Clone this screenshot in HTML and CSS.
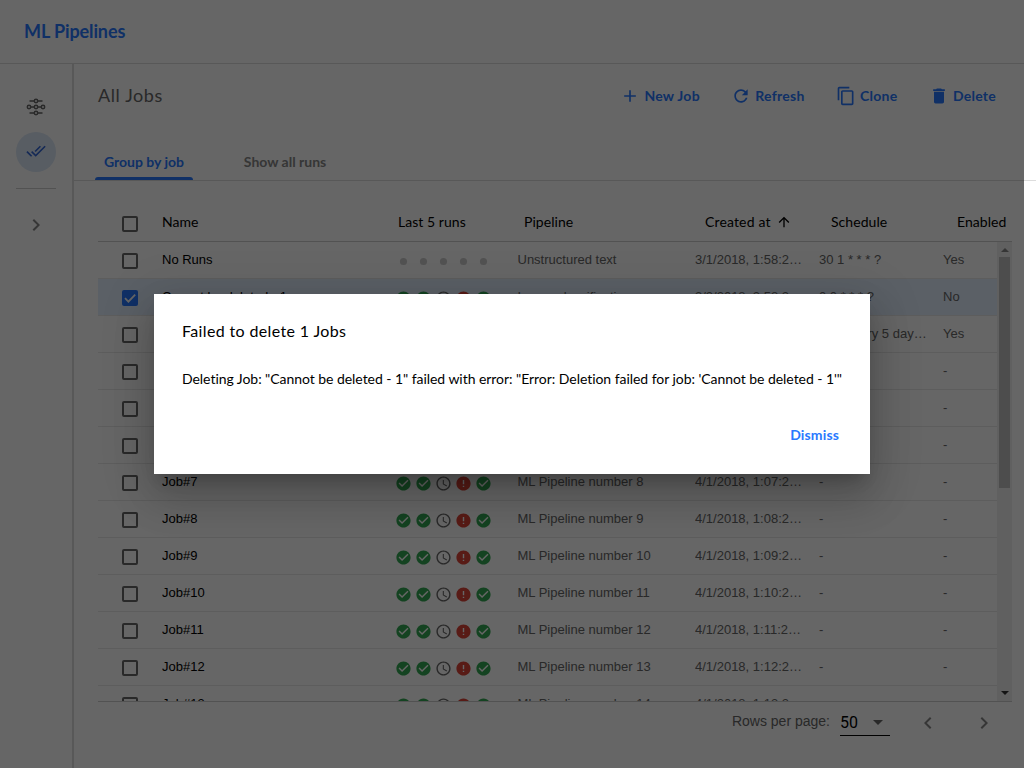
FILE: index.html
```html
<!DOCTYPE html>
<html lang="en">
<head>
<meta charset="utf-8">
<title>ML Pipelines</title>
<link rel="stylesheet" href="styles.css">
</head>
<body>
<svg class="sprite" aria-hidden="true">
  <symbol id="box" viewBox="0 0 16 16"><rect x="1" y="1" width="14" height="14" rx="1" fill="none" stroke="currentColor" stroke-width="2"/></symbol>
  <symbol id="box-checked" viewBox="0 0 16 16"><rect width="16" height="16" rx="2" fill="currentColor"/><path d="M3 8.2 6.4 11.6 13.2 4.6" fill="none" stroke="#fff" stroke-width="1.8"/></symbol>
  <symbol id="ok" viewBox="0 0 24 24"><path fill="currentColor" d="M12 2C6.48 2 2 6.48 2 12s4.48 10 10 10 10-4.480 10-10S17.520 2 12 2zm-2 15l-5-5 1.410-1.410L10 14.170l7.590-7.590L19 8l-9 9z"/></symbol>
  <symbol id="clock" viewBox="0 0 24 24"><path fill="currentColor" d="M11.990 2C6.470 2 2 6.480 2 12s4.470 10 9.990 10C17.520 22 22 17.520 22 12S17.520 2 11.990 2zM12 20c-4.420 0-8-3.580-8-8s3.580-8 8-8 8 3.580 8 8-3.580 8-8 8zM12.500 7H11v6l5.250 3.150.750-1.230-4.500-2.670z"/></symbol>
  <symbol id="error" viewBox="0 0 24 24"><path fill="currentColor" d="M12 2C6.480 2 2 6.480 2 12s4.480 10 10 10 10-4.480 10-10S17.520 2 12 2zm1 15h-2v-2h2v2zm0-4h-2V7h2v6z"/></symbol>
  <symbol id="dot" viewBox="0 0 24 24"><circle cx="12" cy="12" r="5" fill="currentColor"/></symbol>
</svg>

<div class="app">
  <header class="topbar">ML Pipelines</header>
  <div class="body">
    <nav class="sidenav">
      <span class="nav-item">
        <svg width="20" height="20" viewBox="0 0 20 20" fill="none" stroke="currentColor" stroke-width="1.500"><path d="M3.500 4H8M12 4h4.500M4.800 10h3.400M11.800 10h3.400M3.500 16H8M12 16h4.500"/><circle cx="10" cy="4" r="1.700"/><circle cx="3" cy="10" r="1.700"/><circle cx="10" cy="10" r="1.700"/><circle cx="17" cy="10" r="1.700"/><circle cx="10" cy="16" r="1.700"/></svg>
      </span>
      <span class="nav-item active">
        <svg width="20" height="20" viewBox="0 0 24 24"><path fill="currentColor" d="M18 7l-1.410-1.410-6.340 6.340 1.410 1.410L18 7zm4.240-1.410L11.660 16.170 7.480 12l-1.410 1.410L11.660 19l12-12-1.420-1.410zM.410 13.410L6 19l1.410-1.410L1.830 12 .410 13.410z"/></svg>
      </span>
      <span class="nav-rule"></span>
      <span class="nav-expand">
        <svg width="24" height="24" viewBox="0 0 24 24"><path fill="currentColor" d="M10 6L8.590 7.410 13.170 12l-4.580 4.590L10 18l6-6z"/></svg>
      </span>
    </nav>

    <main class="content">
      <div class="toolbar">
        <h1 class="title">All Jobs</h1>
        <div class="actions">
          <button class="action"><svg width="20" height="20" viewBox="0 0 24 24"><path fill="currentColor" d="M19 13h-6v6h-2v-6H5v-2h6V5h2v6h6v2z"/></svg><span>New Job</span></button>
          <button class="action"><svg width="20" height="20" viewBox="0 0 24 24"><path fill="currentColor" d="M17.650 6.350C16.200 4.900 14.210 4 12 4c-4.420 0-7.990 3.580-7.990 8s3.570 8 7.990 8c3.730 0 6.840-2.550 7.730-6h-2.080c-.820 2.330-3.040 4-5.650 4-3.310 0-6-2.690-6-6s2.690-6 6-6c1.660 0 3.140.690 4.220 1.780L13 11h7V4l-2.350 2.350z"/></svg><span>Refresh</span></button>
          <button class="action"><svg width="20" height="20" viewBox="0 0 24 24"><path fill="currentColor" d="M16 1H4c-1.100 0-2 .9-2 2v14h2V3h12V1zm3 4H8c-1.100 0-2 .9-2 2v14c0 1.100.9 2 2 2h11c1.100 0 2-.9 2-2V7c0-1.100-.9-2-2-2zm0 16H8V7h11v14z"/></svg><span>Clone</span></button>
          <button class="action"><svg width="20" height="20" viewBox="0 0 24 24"><path fill="currentColor" d="M6 19c0 1.100.9 2 2 2h8c1.100 0 2-.9 2-2V7H6v12zM19 4h-3.500l-1-1h-5l-1 1H5v2h14V4z"/></svg><span>Delete</span></button>
        </div>
      </div>

      <div class="tabs">
        <span class="tab selected"><span>Group by job</span></span>
        <span class="tab"><span>Show all runs</span></span>
      </div>

      <div class="table">
        <div class="thead">
          <svg class="check"><use href="#box"/></svg>
          <span>Name</span>
          <span>Last 5 runs</span>
          <span>Pipeline</span>
          <span class="sorted">Created at<svg width="16" height="16" viewBox="0 0 24 24"><path fill="currentColor" d="M4 12l1.410 1.410L11 7.830V20h2V7.830l5.580 5.590L20 12l-8-8-8 8z"/></svg></span>
          <span>Schedule</span>
          <span>Enabled</span>
        </div>
        <div class="viewport">
          <div class="rows" id="rows"></div>
          <div class="scrollbar"><span class="arrow-up"></span><span class="thumb"></span><span class="arrow-down"></span></div>
        </div>
      </div>

      <footer class="pager">
        <span class="pager-label">Rows per page:</span>
        <span class="select"><span>50</span><i class="caret"></i></span>
        <svg class="prev" width="24" height="24" viewBox="0 0 24 24"><path fill="currentColor" d="M15.410 7.410L14 6l-6 6 6 6 1.410-1.410L10.830 12z"/></svg>
        <svg class="next" width="24" height="24" viewBox="0 0 24 24"><path fill="currentColor" d="M10 6L8.590 7.410 13.170 12l-4.580 4.590L10 18l6-6z"/></svg>
      </footer>
    </main>
  </div>
</div>

<div class="backdrop">
  <div class="dialog" role="dialog">
    <h2 class="dialog-title">Failed to delete 1 Jobs</h2>
    <p class="dialog-text">Deleting Job: "Cannot be deleted - 1" failed with error: "Error: Deletion failed for job: 'Cannot be deleted - 1'"</p>
    <button class="dismiss"><span>Dismiss</span></button>
  </div>
</div>
<script src="rows.js"></script>
</body>
</html>
```
FILE: rows.js
```js
const RUNS = ['ok', 'ok', 'clock', 'error', 'ok'];
const NO_RUNS = ['dot', 'dot', 'dot', 'dot', 'dot'];

const jobs = [
  { name: 'No Runs', runs: NO_RUNS, pipeline: 'Unstructured text', created: '3/1/2018, 1:58:26 PM', schedule: '30 1 * * * ?', enabled: 'Yes' },
  { name: 'Cannot be deleted - 1', runs: RUNS, pipeline: 'Image classification', created: '3/2/2018, 2:58:26 PM', schedule: '0 0 * * * ?', enabled: 'No', selected: true },
  { name: 'Cannot be deleted - 2', runs: RUNS, pipeline: 'Image classification', created: '3/3/2018, 3:58:26 PM', schedule: 'Run every 5 days at noon', enabled: 'Yes' },
];
for (let n = 4; n <= 13; n++) {
  jobs.push({
    name: 'Job#' + n,
    runs: RUNS,
    pipeline: 'ML Pipeline number ' + (n + 1),
    created: '4/1/2018, 1:' + String(n).padStart(2, '0') + ':26 PM',
    schedule: '-',
    enabled: '-',
  });
}

const icon = (id, cls) => `<svg class="${cls}"><use href="#${id}"/></svg>`;

document.getElementById('rows').innerHTML = jobs.map(job => `
  <div class="row${job.selected ? ' selected' : ''}">
    ${icon(job.selected ? 'box-checked' : 'box', 'check')}
    <span class="cell name">${job.name}</span>
    <span class="runs">${job.runs.map(r => icon(r, 'run ' + r)).join('')}</span>
    <span class="cell">${job.pipeline}</span>
    <span class="cell">${job.created}</span>
    <span class="cell">${job.schedule}</span>
    <span class="cell">${job.enabled}</span>
  </div>`).join('');
```
FILE: styles.css
```css
* { box-sizing: border-box; }
html, body { margin: 0; height: 768px; overflow: hidden; }
body { background: #fff; font-family: Lato, sans-serif; font-size: 14px; color: #000; }
button { background: none; border: 0; padding: 0; font: inherit; }
.sprite { position: absolute; width: 0; height: 0; }

.app { width: 1036px; height: 768px; display: flex; flex-direction: column; }
.topbar { width: 1024px; height: 64px; border-bottom: 1px solid #ddd; padding-left: 24px; line-height: 63px; font-size: 18px; font-weight: 700; color: #2979ff; letter-spacing: -.1px; }
.body { flex: 1; display: flex; min-height: 0; }

.sidenav { width: 74px; border-right: 2px solid #ddd; display: flex; flex-direction: column; align-items: center; padding: 23px 1px 0 0; color: #666; }
.nav-item { width: 40px; height: 40px; border-radius: 50%; display: grid; place-items: center; margin-bottom: 5px; }
.nav-item.active { background: #dce8f7; color: #3367d6; margin-bottom: 0; padding-bottom: 2px; }
.nav-rule { width: 40px; height: 1px; background: #ccc; margin-top: 16px; }
.nav-expand { margin-top: 24px; height: 24px; color: #888; }

.content { flex: 1; display: flex; flex-direction: column; min-width: 0; }
.toolbar { height: 64px; padding: 0 40px 0 24px; display: flex; align-items: center; justify-content: space-between; }
.title { margin: 0; padding-bottom: 2px; font-size: 18px; font-weight: 400; color: #666; letter-spacing: .6px; }
.actions { display: flex; color: #2979ff; font-weight: 700; }
.action { display: flex; align-items: center; gap: 4px; color: inherit; letter-spacing: .25px; }
.action span { padding-bottom: 2px; }
.action + .action { margin-left: 31.500px; }

.tabs { height: 53px; border-bottom: 1px solid #ddd; display: flex; color: #888; font-weight: 700; padding: 16px 0 0 21px; }
.tab { width: 98px; height: 36px; text-align: center; line-height: 35px; }
.tab + .tab { margin-left: 43px; }
.tab.selected { color: #2979ff; }
.tab.selected::after { content: ""; display: block; height: 3px; margin-top: -2px; background: #2979ff; border-radius: 3px 3px 0 0; }

.table { width: 914px; height: 521px; margin-left: 24px; padding-top: 24px; border-bottom: 1px solid #ccc; display: flex; flex-direction: column; }
.thead { height: 37px; flex: none; border-bottom: 1px solid #ccc; display: grid; grid-template-columns: 64px 236px 126px 181px 126px 126px 1fr; align-items: center; }
.thead span { white-space: nowrap; padding-bottom: 3px; letter-spacing: .05px; }
.thead .sorted { display: flex; align-items: center; gap: 5px; letter-spacing: .15px; }
.sorted svg { margin-top: 1px; }
.viewport { flex: 1; display: flex; overflow: hidden; min-height: 0; }
.rows { flex: 1; overflow: hidden; }
.row { height: 37px; border-bottom: 1px solid #e8e8e8; display: grid; grid-template-columns: 64px 234.500px 121px 177.500px 124px 124px 1fr; align-items: center; font: 13px "Liberation Sans", sans-serif; color: #666; }
.row.selected { background: #e3effe; }
.check { width: 16px; height: 16px; margin: 2px 0 0 24px; color: #666; }
.selected .check { color: #2979ff; }
.runs { display: flex; gap: 3px; padding-top: 3px; margin-left: -1.500px; }
.run { width: 17px; height: 17px; }
.ok { color: #34a853; }
.clock { color: #666; }
.error { color: #db4437; }
.dot { color: #ccc; }
.cell { padding: 0 15px 2px 0; overflow: hidden; text-overflow: ellipsis; white-space: nowrap; }
.cell.name { color: #000; }

.scrollbar { width: 15px; background: #f1f1f1; display: flex; flex-direction: column; align-items: center; padding: 6px 0; }
.arrow-up { border: 4px solid transparent; border-top: 0; border-bottom-color: #888; }
.thumb { width: 11px; height: 231px; background: #c1c1c1; margin: 5px 0 auto; }
.arrow-down { border: 4px solid transparent; border-bottom: 0; border-top-color: #333; }

.pager { height: 42px; display: flex; align-items: center; padding: 0 40px 0 0; justify-content: flex-end; color: #666; font: 14px "Liberation Sans", sans-serif; }
.pager-label { margin-right: 10px; padding-bottom: 4px; }
.select { width: 50px; height: 26px; border-bottom: 1px solid #000; display: flex; align-items: center; justify-content: space-between; padding-right: 7px; color: #000; font: 16px Roboto, sans-serif; }
.caret { border: 5px solid transparent; border-bottom: 0; border-top-color: #666; }
.prev { margin-left: 26px; }
.next { margin-left: 32px; }
.prev, .next { color: #888; }

.backdrop { position: absolute; top: 0; left: 0; width: 1024px; height: 768px; background: rgba(0,0,0,.6); display: grid; place-items: center; }
.dialog { width: 716px; height: 180px; background: #fff; padding: 27px 28px; display: flex; flex-direction: column; box-shadow: 0 11px 15px -7px rgba(0,0,0,.2), 0 24px 38px 3px rgba(0,0,0,.14), 0 9px 46px 8px rgba(0,0,0,.12); }
.dialog-title { margin: 0; font-size: 16px; font-weight: 400; line-height: 20px; letter-spacing: .36px; }
.dialog-text { margin: 28px 0 0; line-height: 20px; white-space: nowrap; letter-spacing: -.046px; }
.dismiss { margin: 36px 3px 0 auto; color: #2979ff; font-weight: 700; line-height: 20px; letter-spacing: .15px; }
```
